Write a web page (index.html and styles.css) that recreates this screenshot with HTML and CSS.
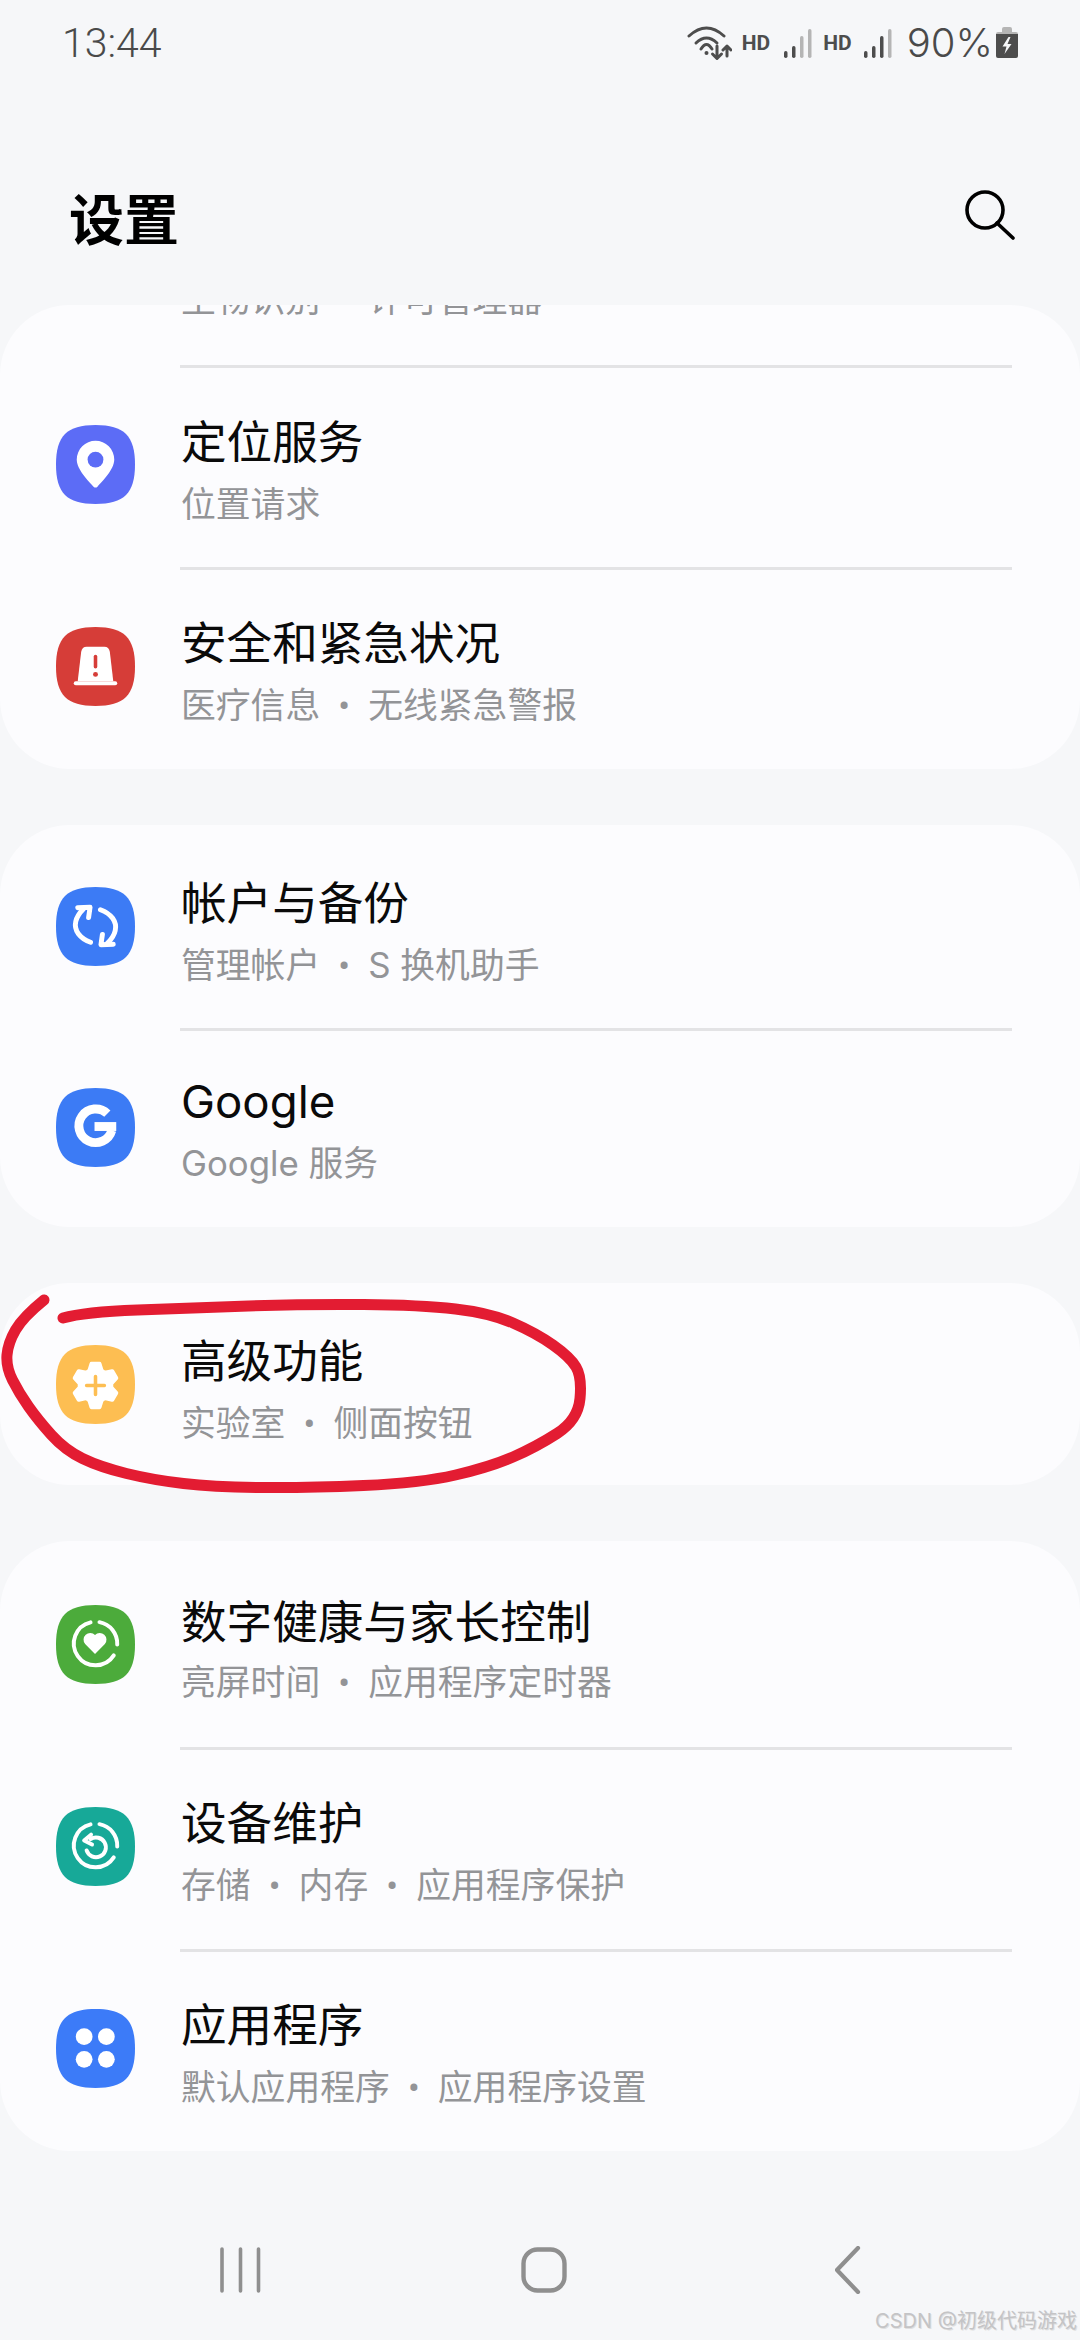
FILE: index.html
```html
<!DOCTYPE html>
<html lang="zh-CN">
<head>
    <meta charset="UTF-8">
    <meta name="viewport" content="width=device-width, initial-scale=1.0">
    <title>设置</title>
    <link rel="stylesheet" href="styles.css">
</head>
<body>
    <svg class="defs" width="0" height="0">
        <symbol id="squircle" viewBox="0 0 80 80">
            <path d="M40 0C69 0 80 11 80 40S69 80 40 80 0 69 0 40 11 0 40 0Z"/>
        </symbol>
    </svg>

    <div class="phone">
        <div class="status-bar">
            <span class="clock">13:44</span>
            <div class="status-icons">
                <svg class="wifi" width="46" height="36" viewBox="0 0 46 36">
                    <g fill="none" stroke="#4d4d4d" stroke-width="3" stroke-linecap="round" stroke-linejoin="round">
                        <path d="M3 11Q20.5 -5 38 11"/>
                        <path d="M10 18Q20.5 8 31 18"/>
                        <path d="M15 24Q20.5 15 26 24"/>
                        <path d="M31 21V33M26.5 29L31 33.5 35.5 29"/>
                        <path d="M41 31V21M37 25L41 21 45 25"/>
                    </g>
                    <circle cx="20.5" cy="28" r="2" fill="#4d4d4d"/>
                </svg>
                <span class="hd">HD</span>
                <svg class="signal" width="30" height="30" viewBox="0 0 30 30">
                    <rect x="0" y="22" width="3.5" height="7" rx="1.7" fill="#4d4d4d"/>
                    <rect x="8" y="17" width="3.5" height="12" rx="1.7" fill="#4d4d4d"/>
                    <rect x="16" y="7" width="3.5" height="22" rx="1.7" fill="#b5b5b5"/>
                    <rect x="24" y="0" width="3.5" height="29" rx="1.7" fill="#b5b5b5"/>
                </svg>
                <span class="hd hd-second">HD</span>
                <svg class="signal" width="30" height="30" viewBox="0 0 30 30">
                    <rect x="0" y="22" width="3.5" height="7" rx="1.7" fill="#4d4d4d"/>
                    <rect x="8" y="17" width="3.5" height="12" rx="1.7" fill="#4d4d4d"/>
                    <rect x="16" y="7" width="3.5" height="22" rx="1.7" fill="#4d4d4d"/>
                    <rect x="24" y="0" width="3.5" height="29" rx="1.7" fill="#b5b5b5"/>
                </svg>
                <span class="percent">90%</span>
                <svg class="battery" width="22" height="31" viewBox="0 0 22 31">
                    <path d="M6 2a2 2 0 0 1 2-2h6a2 2 0 0 1 2 2v3h4a2 2 0 0 1 2 2H0a2 2 0 0 1 2-2h4Z" fill="#b5b5b5"/>
                    <path d="M0 7h22v22a2 2 0 0 1-2 2H2a2 2 0 0 1-2-2Z" fill="#4d4d4d"/>
                    <path d="M12.5 10L6.5 19.5H10.5L8.5 27 15.5 17H11.5L14.5 10Z" fill="#f6f7f9"/>
                </svg>
            </div>
        </div>

        <div class="app-bar">
            <h1 class="title">设置</h1>
            <svg class="search" width="50" height="50" viewBox="0 0 50 50">
                <circle cx="20" cy="20" r="18" fill="none" stroke="#000" stroke-width="3.6"/>
                <path d="M32 33L48 48" fill="none" stroke="#000" stroke-width="3.6" stroke-linecap="round"/>
            </svg>
        </div>

        <div class="cards">
            <section class="card">
                <div class="row-clipped">
                    <div class="row-sub">生物识别<span class="sep">•</span>许可管理器</div>
                </div>
                <div class="divider"></div>
                <div class="row row-lined">
                    <svg class="icon" viewBox="0 0 80 80">
                        <use href="#squircle" fill="#5c6cf6"/>
                        <path d="M40 16a19 19 0 0 1 19 19c0 10-12 22-17 27.500a3 3 0 0 1-4 0c-5-5.500-17-17.500-17-27.500a19 19 0 0 1 19-19Z" fill="#fff"/>
                        <circle cx="40" cy="35" r="8" fill="#5c6cf6"/>
                    </svg>
                    <div class="row-text">
                        <div class="row-main">定位服务</div>
                        <div class="row-sub">位置请求</div>
                    </div>
                </div>
                <div class="divider"></div>
                <div class="row row-lined">
                    <svg class="icon" viewBox="0 0 80 80">
                        <use href="#squircle" fill="#d63d38"/>
                        <path d="M31 20h18c3 0 5 2 5.500 5L58 55H22l3.500-30c.5-3 2.500-5 5.500-5Z" fill="#fff"/>
                        <rect x="18" y="55" width="44" height="4" rx="2" fill="#fff"/>
                        <rect x="38.200" y="28" width="3.600" height="14" rx="1.800" fill="#d63d38"/>
                        <circle cx="40" cy="48" r="2.500" fill="#d63d38"/>
                    </svg>
                    <div class="row-text">
                        <div class="row-main">安全和紧急状况</div>
                        <div class="row-sub">医疗信息<span class="sep">•</span>无线紧急警报</div>
                    </div>
                </div>
            </section>

            <section class="card">
                <div class="row">
                    <svg class="icon" viewBox="0 0 80 80">
                        <use href="#squircle" fill="#3c7bf5"/>
                        <g id="sync-half" fill="none" stroke="#fff" stroke-width="5" stroke-linecap="round" stroke-linejoin="round">
                            <path d="M35 56C24 52 18 44 20 35C21 30 24 26 28 22"/>
                            <path d="M22 21L34.500 20.500L33 31"/>
                        </g>
                        <use href="#sync-half" transform="rotate(180 40 39.500)"/>
                    </svg>
                    <div class="row-text">
                        <div class="row-main">帐户与备份</div>
                        <div class="row-sub">管理帐户<span class="sep">•</span>S 换机助手</div>
                    </div>
                </div>
                <div class="divider"></div>
                <div class="row row-lined row-short">
                    <svg class="icon" viewBox="0 0 80 80">
                        <use href="#squircle" fill="#3c7bf5"/>
                        <path d="M52 26A17 17 0 1 0 56.500 43" fill="none" stroke="#fff" stroke-width="9"/>
                        <rect x="39" y="34.500" width="22" height="9" fill="#fff"/>
                    </svg>
                    <div class="row-text">
                        <div class="row-main">Google</div>
                        <div class="row-sub">Google 服务</div>
                    </div>
                </div>
            </section>

            <section class="card">
                <div class="row row-single">
                    <svg class="icon" viewBox="0 0 80 80">
                        <use href="#squircle" fill="#fdbe52"/>
                        <g fill="#fff">
                            <circle cx="40" cy="41" r="18"/>
                            <path id="gear-tooth" d="M34 18.500a2 2 0 0 1 2-1.500h8a2 2 0 0 1 2 1.500L49 28H31Z"/>
                            <use href="#gear-tooth" transform="rotate(60 40 41)"/>
                            <use href="#gear-tooth" transform="rotate(120 40 41)"/>
                            <use href="#gear-tooth" transform="rotate(180 40 41)"/>
                            <use href="#gear-tooth" transform="rotate(240 40 41)"/>
                            <use href="#gear-tooth" transform="rotate(300 40 41)"/>
                        </g>
                        <path d="M31 41H49M40 32V50" fill="none" stroke="#fdbe52" stroke-width="3.600" stroke-linecap="round"/>
                    </svg>
                    <div class="row-text">
                        <div class="row-main">高级功能</div>
                        <div class="row-sub">实验室<span class="sep">•</span>侧面按钮</div>
                    </div>
                </div>
            </section>

            <section class="card">
                <div class="row row-tall">
                    <svg class="icon" viewBox="0 0 80 80">
                        <use href="#squircle" fill="#4cab3b"/>
                        <g fill="none" stroke="#fff" stroke-width="4" stroke-linecap="round">
                            <path d="M44 17.400A22 22 0 0 1 62 40"/>
                            <path d="M58.500 51A22 22 0 1 1 35 17.600"/>
                        </g>
                        <path d="M39.500 49.500L29.500 39.500a6.800 6.800 0 0 1 10-9.200a6.800 6.800 0 0 1 10 9.200Z" fill="#fff"/>
                    </svg>
                    <div class="row-text">
                        <div class="row-main">数字健康与家长控制</div>
                        <div class="row-sub">亮屏时间<span class="sep">•</span>应用程序定时器</div>
                    </div>
                </div>
                <div class="divider"></div>
                <div class="row row-lined">
                    <svg class="icon" viewBox="0 0 80 80">
                        <use href="#squircle" fill="#17a998"/>
                        <g fill="none" stroke="#fff" stroke-width="4" stroke-linecap="round" stroke-linejoin="round">
                            <path d="M44 17.400A22 22 0 0 1 62 40"/>
                            <path d="M58.500 51A22 22 0 1 1 35 17.600"/>
                            <path d="M35 32.500A10 10 0 1 1 31 44"/>
                            <path d="M35.500 28L28.500 34L36.500 38"/>
                        </g>
                    </svg>
                    <div class="row-text">
                        <div class="row-main">设备维护</div>
                        <div class="row-sub">存储<span class="sep">•</span>内存<span class="sep">•</span>应用程序保护</div>
                    </div>
                </div>
                <div class="divider"></div>
                <div class="row row-lined">
                    <svg class="icon" viewBox="0 0 80 80">
                        <use href="#squircle" fill="#3c7bf8"/>
                        <g fill="#fff">
                            <circle cx="28.500" cy="28" r="8.500"/>
                            <circle cx="51" cy="28" r="8.500"/>
                            <circle cx="28.500" cy="51" r="8.500"/>
                            <circle cx="51" cy="51" r="8.500"/>
                        </g>
                    </svg>
                    <div class="row-text">
                        <div class="row-main">应用程序</div>
                        <div class="row-sub">默认应用程序<span class="sep">•</span>应用程序设置</div>
                    </div>
                </div>
            </section>
        </div>

        <div class="nav-bar">
            <svg class="nav-recent" width="44" height="46" viewBox="0 0 44 46">
                <path d="M3 2V44M21.500 2V44M39.500 2V44" fill="none" stroke="#8f8f8f" stroke-width="3.600" stroke-linecap="round"/>
            </svg>
            <svg class="nav-home" width="46" height="46" viewBox="0 0 46 46">
                <rect x="2.500" y="2.500" width="41" height="41" rx="14" fill="none" stroke="#8f8f8f" stroke-width="4.400"/>
            </svg>
            <svg class="nav-back" width="26" height="48" viewBox="0 0 26 48">
                <path d="M23 2L2 24L23 46" fill="none" stroke="#8f8f8f" stroke-width="4.200" stroke-linecap="round" stroke-linejoin="round"/>
            </svg>
        </div>

        <!-- red marker circle drawn over the screenshot -->
        <svg class="marker" width="1080" height="2340" viewBox="0 0 1080 2340">
            <path d="M44 1300Q23 1317 15.500 1330Q8 1343 7 1355Q6 1367 12.500 1380Q19 1393 28.500 1406.500Q38 1420 51.500 1435Q65 1450 82.500 1458.500Q100 1467 126.500 1473.500Q153 1480 183.500 1483.500Q214 1487 260 1487.500Q306 1488 363.500 1485.500Q421 1483 455.500 1475Q490 1467 513 1457Q536 1447 557 1433.500Q578 1420 580 1398.500Q582 1377 576 1367Q570 1357 553 1345Q536 1333 513 1323Q490 1313 455.500 1309Q421 1305 363.500 1304.500Q306 1304 248.500 1306Q191 1308 137.500 1310Q84 1312 63 1318" fill="none" stroke="#e31c32" stroke-width="11" stroke-linecap="round" stroke-linejoin="round"/>
        </svg>

        <div class="watermark">CSDN @初级代码游戏</div>
    </div>
</body>
</html>
```
FILE: styles.css
```css
* {
    margin: 0;
    padding: 0;
    box-sizing: border-box;
}

body {
    background: #f6f7f9;
    font-family: Inter, "Noto Sans CJK SC", sans-serif;
    color: #0a0a0a;
}

.defs {
    position: absolute;
}

.phone {
    position: relative;
    width: 1080px;
    height: 2340px;
    overflow: hidden;
}

/* status bar */
.status-bar {
    display: flex;
    justify-content: space-between;
    align-items: center;
    height: 85px;
    padding: 0 62px 0 62px;
    color: #4a4a4a;
}

.clock {
    font-family: Roboto, sans-serif;
    font-weight: 300;
    font-size: 41px;
}

.status-icons {
    display: flex;
    align-items: center;
}

.wifi {
    margin-right: 10px;
}

.hd {
    font-family: Roboto, sans-serif;
    font-weight: 700;
    font-size: 21px;
    color: #4d4d4d;
    margin-right: 14px;
}

.hd-second {
    margin-left: 9px;
    margin-right: 12px;
}

.signal {
    margin-top: 2px;
}

.percent {
    font-family: Inter, sans-serif;
    font-weight: 300;
    font-size: 40px;
    margin-left: 13px;
    margin-right: 3px;
}

/* header */
.app-bar {
    display: flex;
    justify-content: space-between;
    align-items: center;
    height: 220px;
    padding: 100px 65px 50px 69px;
}

.title {
    font-size: 55px;
    font-weight: 700;
    line-height: 70px;
    color: #000;
}

.search {
    margin-bottom: 10px;
}

/* list cards */
.cards {
    display: flex;
    flex-direction: column;
    gap: 56px;
}

.card {
    background: #fcfcfe;
    border-radius: 70px;
    overflow: hidden;
}

.row {
    display: flex;
    align-items: center;
    gap: 46px;
    height: 203px;
    padding-left: 56px;
}

.row-lined {
    height: 199px;
    padding-bottom: 6px;
}

.row-short {
    height: 196px;
    padding-bottom: 4px;
}

.row-short .row-text {
    margin-top: 4px;
}

.row-single {
    height: 202px;
}

.row-tall {
    height: 206px;
}

.row-tall .row-main {
    margin-bottom: 6px;
}

.row-clipped {
    display: flow-root;
    height: 60px;
    padding-left: 181px;
}

.row-clipped .row-sub {
    margin-top: -29px;
}

.divider {
    height: 3px;
    margin: 0 68px 0 180px;
    background: #e3e3e5;
}

.icon {
    width: 79px;
    height: 79px;
    flex-shrink: 0;
}

.row-text {
    margin-top: 10px;
}

.row-main {
    font-size: 45.6px;
    line-height: 60px;
    margin-bottom: 8px;
}

.row-sub {
    font-size: 34.8px;
    line-height: 46px;
    color: #939497;
}

.sep {
    display: inline-block;
    width: 48px;
    text-align: center;
    font-family: Roboto, sans-serif;
}

/* bottom nav */
.nav-bar {
    display: flex;
    align-items: center;
    height: 46px;
    margin-top: 96px;
}

.nav-recent {
    margin-left: 219px;
}

.nav-home {
    margin-left: 258px;
}

.nav-back {
    margin-left: 268px;
}

/* overlays */
.marker {
    position: absolute;
    top: 0;
    left: 0;
}

.watermark {
    position: absolute;
    right: 3px;
    bottom: 6px;
    font-size: 20px;
    color: #c4c4c6;
    text-shadow: 1px 1px 0 #e0e0e0;
}
```
